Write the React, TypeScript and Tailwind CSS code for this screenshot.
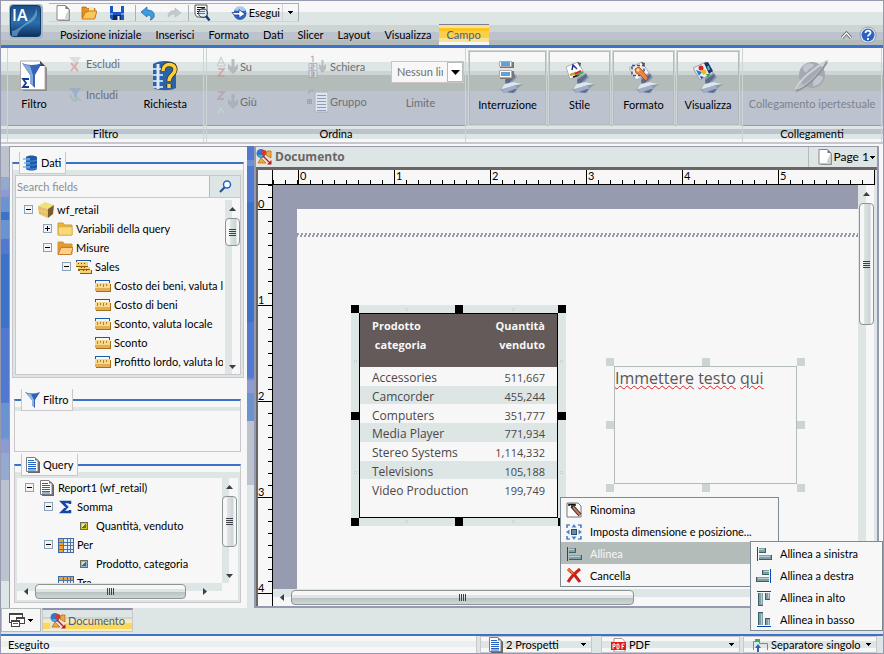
import React from 'react';
import clsx from 'clsx';

type IconProps = { className?: string };

/* ---------- Small shared glyphs ---------- */

const Caret = ({ className = '' }: IconProps) => (
  <svg viewBox="0 0 5 3" className={clsx('h-[3px] w-[5px] shrink-0', className)} shapeRendering="crispEdges">
    <path d="M0 0h5v1H4v1H3v1H2V2H1V1H0z" fill="#000" />
  </svg>
);

const Arrow = ({ dir }: { dir: 'up' | 'down' | 'left' | 'right' }) => {
  const paths = {
    up: 'M1 6l3.500-4L8 6z',
    down: 'M1 3l3.500 4L8 3z',
    left: 'M6 1L2 4.500 6 8z',
    right: 'M3 1l4 3.500L3 8z',
  };
  return (
    <svg viewBox="0 0 9 9" className="h-[9px] w-[9px] shrink-0">
      <path d={paths[dir]} fill="#3a3f48" />
    </svg>
  );
};

const Expander = ({ open }: { open: boolean }) => (
  <svg viewBox="0 0 9 9" className="h-[9px] w-[9px] shrink-0" shapeRendering="crispEdges">
    <path d="M0 0h9v9H0z" fill="#8aa3ba" />
    <path d="M1 1h7v7H1z" fill="#f3f3f3" />
    <path d="M2 4h5v1H2z" fill="#000" />
    {!open && <path d="M4 2h1v5H4z" fill="#000" />}
  </svg>
);

/* ---------- Toolbar icons ---------- */

const PageIcon = () => (
  <svg viewBox="0 0 16 16" className="h-4 w-4 shrink-0">
    <path d="M3.500 15.500V1H11l4 4v11H4z" fill="#9a9a9a" />
    <path d="M2 .5h8.500l3.500 3.500v11H2z" fill="#fff" stroke="#8a8787" />
    <path d="M10 15c0-4 1-7 3.500-9v9z" fill="#ccd5d3" />
    <path d="M10.500.5V4H14z" fill="#777" />
  </svg>
);

const OpenIcon = () => (
  <svg viewBox="0 0 16 16" className="h-4 w-4 shrink-0">
    <path d="M1 13V2h4l1.500 1.500H14V13z" fill="#e8921e" stroke="#b86a12" strokeWidth=".8" />
    <path d="M8 1.500l5 1v6H8z" fill="#fbe3a8" />
    <path d="M1 14L4 7.500l4-1.500h8L13.500 14z" fill="#fbc65a" stroke="#b86a12" strokeWidth=".8" />
  </svg>
);

const SaveIcon = () => (
  <svg viewBox="0 0 16 16" className="h-4 w-4 shrink-0">
    <path d="M1 1h14v14H3l-2-2z" fill="#1d56c0" />
    <path d="M4 1h8v6H4z" fill="#f3f3f3" />
    <path d="M4 10h8v5H4z" fill="#112b66" />
    <path d="M8.500 11h2v4h-2z" fill="#fff" />
    <path d="M1 8h3v2H1zM12 8h3v2h-3z" fill="#5e9ae8" />
  </svg>
);

const UndoIcon = ({ redo = false }: { redo?: boolean }) => (
  <svg viewBox="0 0 16 16" className="h-4 w-4 shrink-0">
    <path
      d={redo ? 'M15 8l-6-5v3C4 5 2 8 2 12l2-1c1-2 3-2 5-2v3z' : 'M1 7l6-5v3c5 0 8 2 7 7-1 2-3 3-4 3 2-2 1-5-3-5v2z'}
      fill={redo ? '#c3cbd2' : '#3d9be0'}
      stroke={redo ? '#b4bcba' : '#1b5ba8'}
      strokeWidth=".7"
    />
  </svg>
);

const PreviewIcon = () => (
  <svg viewBox="0 0 18 18" className="h-[18px] w-[18px] shrink-0">
    <path d="M2 1h12v12H4l-2-3z" fill="#fff" stroke="#555" />
    <path d="M4 3.500h8M4 5.500h8M4 7.500h8M4 9.500h8" stroke="#111" />
    <circle cx="10" cy="9" r="4.500" fill="#bcd9ef" fillOpacity=".5" stroke="#444" />
    <path d="M13 12l3.500 4.500" stroke="#1b3d7a" strokeWidth="2.500" />
  </svg>
);

const RunIcon = () => (
  <svg viewBox="0 0 16 16" className="h-4 w-4 shrink-0">
    <circle cx="9" cy="8.500" r="6.500" fill="#2f66c0" />
    <path d="M3 5c2-5 10-5 12 0-3 2-8 1-12 0z" fill="#a9cbee" />
    <path d="M1 7.500h7V4.500l6 4.500-6 4v-3H3z" fill="#fff" stroke="#1b3d9a" strokeWidth=".8" />
  </svg>
);

const AppLogo = () => (
  <svg viewBox="0 0 34 36" className="h-9 w-[34px]">
    <defs>
      <linearGradient id="logoFill" x1="0" y1="0" x2="0" y2="1">
        <stop offset="0" stopColor="#1c4f86" />
        <stop offset=".55" stopColor="#2a6fae" />
        <stop offset="1" stopColor="#0e2f5c" />
      </linearGradient>
    </defs>
    <rect x="0" y="0" width="34" height="35" rx="4" fill="#a9b8c6" />
    <rect x="1.500" y="1.500" width="30" height="31" rx="3" fill="url(#logoFill)" stroke="#123a66" />
    <path d="M27 4c4 10-4 14-10 17-5 3-7 6-9 11h-5v-5c6-1 9-5 14-8 5-4 10-8 10-15z" fill="#7fb6dd" fillOpacity=".6" />
    <text x="3" y="17" fontSize="16" fontWeight="600" fill="#fff" fontFamily="Open Sans, sans-serif">IA</text>
  </svg>
);

const HelpIcon = () => (
  <svg viewBox="0 0 18 18" className="h-[18px] w-[18px]">
    <circle cx="9" cy="9" r="8" fill="#e8edf0" stroke="#9aa0ac" />
    <circle cx="9" cy="9" r="6.500" fill="#2b62c4" />
    <path d="M6.500 7c0-3.500 5.500-3 5 0C11 8.500 9 9 9 10.500M9 12v2" stroke="#fff" strokeWidth="1.800" fill="none" />
  </svg>
);

/* ---------- Ribbon icons ---------- */

const FilterBigIcon = () => (
  <svg viewBox="0 0 28 32" className="h-8 w-7">
    <path d="M3 3h19l5 5v23H3z" fill="#8b8b8b" />
    <path d="M.5 1H20l5 5v23.500H.5z" fill="#fff" stroke="#b4a8a8" />
    <path d="M20 1v5h5z" fill="#444" />
    <path d="M2 3c5 2.500 14 2.500 20 0l-7 12v13l-5-5v-8z" fill="#3763b8" />
    <path d="M2 3c3 2 6 2.500 8 2.500l3 10v10l-3-3v-8z" fill="#86a9dc" />
    <path d="M9 19H3l3 4-3 4h6" fill="none" stroke="#163f94" strokeWidth="1.800" />
  </svg>
);

const QueryBigIcon = () => (
  <svg viewBox="0 0 28 32" className="h-8 w-7">
    <path d="M2 4c6-4 18-4 23 0v24c-5 3-17 3-23 0z" fill="#2c61ae" />
    <path d="M2 9h10M2 15h10M2 21h10M2 27h10" stroke="#b8d5ee" strokeWidth="2" />
    <path d="M7 4v25" stroke="#dfeaf4" strokeWidth="3" />
    <path d="M12 11c0-9 13-8 12-1-.5 5-6 5-6 11M18 24v4" fill="none" stroke="#3c2f08" strokeWidth="5" />
    <path d="M12 11c0-9 13-8 12-1-.5 5-6 5-6 11M18 24v4" fill="none" stroke="#f8d33c" strokeWidth="3.500" />
  </svg>
);

const ExcludeIcon = ({ include = false }: { include?: boolean }) => (
  <svg viewBox="0 0 16 16" className="h-4 w-4 shrink-0 opacity-60">
    <path d="M1 1h12l-4 6v6l-3-3V7z" fill={include ? '#8fa5cc' : '#ccd2d2'} />
    {include ? (
      <path d="M2 8l3 5 4 1M8 10l5 4" stroke="#96bc9e" strokeWidth="2" fill="none" />
    ) : (
      <path d="M3 7l7 8M10 6l-7 9" stroke="#d98c88" strokeWidth="2" />
    )}
  </svg>
);

const SortIcon = ({ down = false }: { down?: boolean }) => (
  <svg viewBox="0 0 21 24" className="h-6 w-[21px] shrink-0 opacity-70">
    {down ? (
      <path d="M1 2h6L1 9h6" fill="none" stroke="#ad9a9a" strokeWidth="1.500" />
    ) : (
      <path d="M1 14h6l-6 7h6" fill="none" stroke="#c98f8f" strokeWidth="1.500" />
    )}
    {down ? (
      <path d="M1 23l3-5 3 5" fill="none" stroke="#ccd5d3" strokeWidth="1.500" />
    ) : (
      <path d="M0 11l4-9 4 9zM2 8h4" fill="#e5eaea" stroke="#b4bcc2" />
    )}
    <path d="M11 9l3.500 3V4h3v8L21 9v5l-5 5-5-5z" fill="#a3abb0" />
  </svg>
);

const RankIcon = () => (
  <svg viewBox="0 0 21 24" className="h-6 w-[21px] shrink-0 opacity-70">
    <path d="M2 8.500h8v7H2zM2 15.500h8v7H2z" fill="#dde5e5" stroke="#94a4bd" />
    <path d="M6 1v6M4 2l2-1M4 10h3v2H4v2h3M4 17h3v4H4M4 19h3" stroke="#94798a" fill="none" />
    <path d="M12 9l2.500 2V5h2v6L19 9v5l-3.500 4-3.500-4z" fill="#a5aeb5" />
  </svg>
);

const GroupIcon = () => (
  <svg viewBox="0 0 21 24" className="h-6 w-[21px] shrink-0">
    <path d="M2 4V1h5M.5 9.500h4v4h-4zM2.500 10v3M1 11.500h3" fill="none" stroke="#8fa4cf" />
    <path d="M8 2h13v20H8z" fill="#dfe5ea" stroke="#a8b2bf" />
    <path d="M10 5.500h9M10 8.500h9M10 11.500h9M10 14.500h9M10 17.500h9M10 20.500h9" stroke="#8c9cc0" />
  </svg>
);

/* curled sheet that sits under every framed ribbon icon */
const Stand = () => (
  <g>
    <path d="M12 17l9-5 3 4-4 5 10 2-6 5-2 4H11l-4-4 5-4z" fill="#8b98b3" />
    <path d="M12 19l9-6 1 3-6 6-3 1z" fill="#5b6b8b" />
    <path d="M12 23l8-2 10 2-7 1-11 4-4 0z" fill="#dfe5ee" />
    <path d="M9 28l14-4 1 4-4 4h-9z" fill="#a3aec6" />
    <path d="M14 31l8-3 2 0-4 4z" fill="#5f6f92" />
  </g>
);

const BreakIcon = () => (
  <svg viewBox="0 0 30 32" className="h-8 w-[30px]">
    <Stand />
    <path d="M7 1h14v6H7zM7 10h14v8H7z" fill="#7a7672" />
    <path d="M6.500.5h12v5h-12zM6.500 9.500h12v7h-12z" fill="#fff" stroke="#b4a8a4" />
    <path d="M8 2h9M8 4h9M8 12h9M8 14h9" stroke="#2a82cf" strokeWidth="1.300" />
  </svg>
);

const StyleIcon = () => (
  <svg viewBox="0 0 30 32" className="h-8 w-[30px]">
    <Stand />
    <path d="M1 6l12-5 6 11-14 6z" fill="#fff" stroke="#9aa0a8" strokeWidth=".8" />
    <path d="M12 1l4 1-1 4z" fill="#555" />
    <path d="M7 9l1-5 4 4" stroke="#1f2c8c" strokeWidth="1.500" fill="none" />
    <path d="M5 14l6-2" stroke="#c9a23a" strokeWidth="2.500" />
    <path d="M10 13l6-3" stroke="#d8261f" strokeWidth="2.500" />
    <path d="M8 16l6-2" stroke="#111" strokeWidth="1.500" />
    <path d="M12 14l6-3" stroke="#46a848" strokeWidth="2" />
  </svg>
);

const FormatIcon = () => (
  <svg viewBox="0 0 30 32" className="h-8 w-[30px]">
    <Stand />
    <path d="M0 7l13-6 7 11-13 7z" fill="#f3f5f8" stroke="#9aa0a8" strokeWidth=".8" />
    <path d="M12 1l4 1-1 4z" fill="#555" />
    <path d="M3 4.500h12v10H3z" fill="#fbe3cf" stroke="#2459a8" strokeWidth="1.500" strokeDasharray="3 2" />
    <path d="M6 8l4-2 4 4 5 7-2 3-6-6-4-2z" fill="#e98545" stroke="#9c4715" strokeWidth=".8" />
    <circle cx="9" cy="9" r="1.500" fill="#ffe0bb" />
  </svg>
);

const ViewIcon = () => (
  <svg viewBox="0 0 30 32" className="h-8 w-[30px]">
    <Stand />
    <path d="M0 7l13-6 7 11-13 7z" fill="#e9eef2" stroke="#8a929c" strokeWidth=".8" />
    <path d="M11 2l4-1 5 9-4 3z" fill="#1b3560" />
    <circle cx="8" cy="7" r="2.500" fill="#d8261f" />
    <path d="M3 9l3 6 3-4z" fill="#2b7ac8" />
    <circle cx="11" cy="11" r="2.500" fill="#f5b921" />
    <path d="M13 13l4 0-2 4z" fill="#3ea14b" />
    <path d="M7 15l4 1-3 2z" fill="#1b49a8" />
    <path d="M15 5l1 4" stroke="#4fb4e0" strokeWidth="2" />
  </svg>
);

const LinkIcon = () => (
  <svg viewBox="0 0 34 32" className="h-8 w-[34px]">
    <circle cx="17" cy="15" r="13" fill="#a4a9b2" />
    <path d="M8 7c4-5 10-4 11-2-2 4-6 3-7 7-2 1-4-1-4-5zM19 17c5-3 8-1 9 1-2 6-7 8-10 8z" fill="#c2c7cd" />
    <path d="M1 29c3-9 18-21 31-28-5 10-18 23-28 28" fill="none" stroke="#cdd1d6" strokeWidth="2" />
    <path d="M1 31c8-2 22-14 31-29" fill="none" stroke="#8f949e" strokeWidth="2" />
  </svg>
);

/* ---------- Tree icons ---------- */

const DatabaseIcon = () => (
  <svg viewBox="0 0 16 16" className="h-4 w-4 shrink-0">
    <path d="M3 2c2-2 9-2 11 0v12c-2 2-9 2-11 0z" fill="#1d5aa8" />
    <path d="M0 4h7M1 8h6M0 12h7" stroke="#7db4e6" strokeWidth="1.500" />
    <path d="M3 5c3 1.500 8 1.500 11 0M3 9c3 1.500 8 1.500 11 0M3 13c3 1.500 8 1.500 11 0" stroke="#4a8fd6" fill="none" />
  </svg>
);

const CubeIcon = () => (
  <svg viewBox="0 0 16 16" className="h-4 w-4 shrink-0">
    <path d="M0 4l7-4 9 3-6 4z" fill="#f0e27a" />
    <path d="M0 4l10 3v9L1 12z" fill="#e3bd5c" />
    <path d="M10 7l6-4-1 9-5 4z" fill="#7d5c2b" />
    <path d="M4 5v9M7 6v9M1 8l9 3" stroke="#f0d48c" strokeWidth=".7" />
  </svg>
);

const FolderIcon = ({ open = false }: { open?: boolean }) => (
  <svg viewBox="0 0 16 16" className="h-4 w-4 shrink-0">
    <path d="M1 14V2h5l1.500 2H15v10z" fill={open ? '#e9982c' : '#efb634'} stroke="#c99a3c" />
    {open ? (
      <path d="M1 14.500l3-7h12l-2 7z" fill="#fbd08a" stroke="#c97a2e" />
    ) : (
      <path d="M1.500 6H15v8H1.500z" fill="#fada74" stroke="#d9a94a" strokeWidth=".6" />
    )}
  </svg>
);

const MeasureIcon = () => (
  <svg viewBox="0 0 16 16" className="h-4 w-4 shrink-0" shapeRendering="crispEdges">
    <path d="M0 5V2h15v3h-1V3H1v2z" fill="#1b5ba8" />
    <path d="M1 6h15v8H1z" fill="#a4701c" />
    <path d="M0 5h15v8H0z" fill="#f9d98c" />
    <path d="M0 10h15v3H0z" fill="#e6ae54" />
    <path d="M2 6h1v3H2zM5 6h1v2H5zM8 6h1v3H8zM11 6h1v2h-1z" fill="#b0803a" />
  </svg>
);

const MeasureGroupIcon = () => (
  <svg viewBox="0 0 16 16" className="h-4 w-4 shrink-0" shapeRendering="crispEdges">
    <path d="M0 3V1h15v2h-1V2H1v1z" fill="#1b5ba8" />
    <path d="M0 4h12v4H0zM2 8h12v4H2zM4 11h12v4H4z" fill="#8b5a14" />
    <path d="M0 3h12v4H0zM2 8h12v2H2zM4 11h11v3H4z" fill="#f9cf74" />
    <path d="M2 4h1v1H2zM5 4h1v1H5zM8 4h1v1H8zM5 8h1v1H5zM8 8h1v1H8zM7 11h1v1H7zM10 11h1v1h-1z" fill="#7a4c0e" />
  </svg>
);

const FunnelIcon = () => (
  <svg viewBox="0 0 16 16" className="h-4 w-4 shrink-0">
    <path d="M0 0c5 2 10 2 15 0l-5 8v8l-3-3V8z" fill="#2a63b8" />
    <path d="M0 0c2 1.500 4 2 6 2l3 6v7l-2-2V8z" fill="#8fb4df" />
  </svg>
);

const ReportIcon = () => (
  <svg viewBox="0 0 16 16" className="h-4 w-4 shrink-0">
    <path d="M3 2h9l3 3v11H3z" fill="#666" />
    <path d="M1.500.5H10l3 3v11H1.500z" fill="#fff" stroke="#7d7d7d" />
    <path d="M3 3.500h6M3 5.500h8M3 7.500h8M3 9.500h8M3 11.500h8M3 13h8" stroke="#2563c4" />
    <path d="M10 .5v3h3z" fill="#777" />
  </svg>
);

const SumIcon = () => (
  <svg viewBox="0 0 16 16" className="h-4 w-4 shrink-0">
    <path d="M12 5V3H4l5 5-5 5h8v-2" fill="none" stroke="#1348a6" strokeWidth="2.500" />
  </svg>
);

const GridIcon = ({ across = false }: { across?: boolean }) => (
  <svg viewBox="0 0 16 16" className="h-4 w-4 shrink-0" shapeRendering="crispEdges">
    <path d="M0 1h16v15H0z" fill="#3f6aa8" />
    <path d="M1 2h14v13H1z" fill="#e8eef6" />
    <path d={across ? 'M1 2h14v4H1z' : 'M1 2h4v13H1z'} fill="#f3a32c" />
    <path d="M5 1h1v14H5zM9 1h1v14H9zM12 1h1v14h-1zM1 5h14v1H1zM1 8h14v1H1zM1 12h14v1H1z" fill="#4d72a8" />
  </svg>
);

const FieldIcon = ({ color }: { color: string }) => (
  <svg viewBox="0 0 16 16" className="h-4 w-4 shrink-0" shapeRendering="crispEdges">
    <path d="M3 4h8v8H3z" fill="#6b7058" />
    <path d="M4 5h6v6H4z" fill={color} />
    <path d="M5 6h3v1H7v1H6v1H5z" fill="#fff" fillOpacity=".6" />
    <path d="M8 6h1v4H5V9h1V8h1V7h1z" fill="#222" fillOpacity=".55" />
  </svg>
);

const MagnifierIcon = () => (
  <svg viewBox="0 0 13 13" className="h-[13px] w-[13px]">
    <circle cx="8" cy="4.500" r="3.500" fill="#fff" stroke="#1f66bd" strokeWidth="1.500" />
    <path d="M5.500 7.500L1 12" stroke="#1f4d94" strokeWidth="2" />
  </svg>
);

const DocumentIcon = () => (
  <svg viewBox="0 0 16 16" className="h-4 w-4 shrink-0">
    <rect width="16" height="16" fill="#e8e4dc" />
    <circle cx="5" cy="4.500" r="4.500" fill="#3275cf" />
    <path d="M1 6h6l-2 3z" fill="#43b2cf" />
    <circle cx="8" cy="3.500" r="2.500" fill="#e53222" />
    <path d="M11 2h4v7l-5-3zM2 14l3-5 5 5z" fill="#f0a93a" stroke="#9c6c1a" strokeWidth=".7" />
    <path d="M7 7l7 7" stroke="#c4161c" strokeWidth="1.200" />
    <path d="M15.500 15.500v-4.500l-4.500 4.500z" fill="#c4161c" />
  </svg>
);

const WindowsIcon = () => (
  <svg viewBox="0 0 16 16" className="h-4 w-4 shrink-0" shapeRendering="crispEdges">
    <path d="M0 1h14v10H0z" fill="#444" />
    <path d="M1 3h12v7H1z" fill="#fff" />
    <path d="M7 5h9v7H7z" fill="#444" />
    <path d="M8 7h7v4H8z" fill="#fff" />
    <path d="M2 8h9v7H2z" fill="#444" />
    <path d="M3 10h7v4H3z" fill="#fff" />
    <path d="M4 11h5v1H4z" fill="#2563c4" />
  </svg>
);

/* ---------- Menu icons ---------- */

const RenameIcon = () => (
  <svg viewBox="0 0 16 16" className="h-4 w-4 shrink-0">
    <path d="M1 1h11l3 3v11H1z" fill="#fff" stroke="#777" />
    <path d="M3 4V2.500h6V4M6 3v3" fill="none" stroke="#111" strokeWidth="1.500" />
    <path d="M6 4l8 9" stroke="#333" strokeWidth="4" />
    <path d="M7 5l7 8" stroke="#d2745c" strokeWidth="2" />
  </svg>
);

const ResizeIcon = () => (
  <svg viewBox="0 0 16 16" className="h-4 w-4 shrink-0">
    <path d="M1 4V1h3M12 1h3v3M15 12v3h-3M4 15H1v-3" fill="none" stroke="#1558b8" strokeWidth="1.200" />
    <path d="M8 0l2.500 3.500h-5zM8 16l2.500-3.500h-5zM0 8l3.500-2.500v5zM16 8l-3.500-2.500v5z" fill="#4a83d2" />
    <rect x="5.500" y="5.500" width="5" height="5" fill="#5d8fae" stroke="#2b4c6c" />
  </svg>
);

const DeleteIcon = () => (
  <svg viewBox="0 0 16 16" className="h-4 w-4 shrink-0">
    <path d="M2 1c4 3 8 7 12 13M14 1C9 5 5 9 2 14" fill="none" stroke="#c9201a" strokeWidth="3" />
    <path d="M2 1c2 2 4 3 5 5" stroke="#f07a3a" strokeWidth="2" fill="none" />
  </svg>
);

const AlignIcon = ({ side }: { side: 'left' | 'right' | 'top' | 'bottom' }) => {
  const turn = {
    left: undefined,
    right: 'matrix(-1 0 0 1 16 0)',
    top: 'matrix(0 1 -1 0 16 0)',
    bottom: 'matrix(0 -1 -1 0 16 16)',
  };
  return (
    <svg viewBox="0 0 16 16" className="h-4 w-4 shrink-0" shapeRendering="crispEdges">
      <g transform={turn[side]}>
        <path d="M1 1h1v14H1z" fill="#0a45b0" />
        <path d="M3 2h7v5H3zM3 9h13v5H3z" fill="#3f5f68" />
        <path d="M3 2h6v4H3zM3 9h12v4H3z" fill="#7f9fa6" />
        <path d="M3 3h5v1H3zM3 10h11v1H3z" fill="#b9cfd3" />
      </g>
    </svg>
  );
};

const PdfIcon = () => (
  <svg viewBox="0 0 16 14" className="h-[14px] w-4 shrink-0">
    <path d="M3 .5h8l3 3V14H3z" fill="#fff" stroke="#999" />
    <rect x="0" y="4" width="15" height="8" fill="#e01b18" />
    <path d="M2 11V6h2v2.500H2M6 6v5h1.500l.5-1V7l-.5-1H6M11 11V6h2.500M11 8.500h2" stroke="#fff" fill="none" />
  </svg>
);

const SeparatorIcon = () => (
  <svg viewBox="0 0 16 14" className="h-[14px] w-4 shrink-0">
    <path d="M.5 12V3.500h6v2h8V12" fill="none" stroke="#7b8790" />
    <rect x="2" y="1" width="5" height="3" fill="#31b44c" />
    <path d="M5 6l3 4H6v4H4v-4H2z" fill="#2c62b8" />
  </svg>
);

/* ---------- Scroll bars ---------- */

const VScroll = ({ thumb, className }: { thumb: string; className?: string }) => (
  <div className={clsx('flex w-[15px] shrink-0 flex-col items-center bg-[linear-gradient(90deg,#dde5e5_7px,#f7f7f7_7px)]', className)}>
    <div className="flex h-[18px] shrink-0 items-center"><Arrow dir="up" /></div>
    <div className={clsx('flex w-full flex-col items-center justify-center gap-px rounded-sm border border-[#8c9494] bg-[linear-gradient(90deg,#f7f7f7_4px,#dde5e5_4px,#ccd5d3_10px,#f7f7f7_11px)]', thumb)}>
      {[0, 1, 2, 3].map((n) => <span key={n} className="h-px w-[7px] bg-[#3a3f48]" />)}
    </div>
    <div className="mt-auto flex h-[16px] items-center"><Arrow dir="down" /></div>
  </div>
);

const HScroll = ({ thumb, className, children }: { thumb: string; className?: string; children?: React.ReactNode }) => (
  <div className={clsx('flex shrink-0 items-center bg-[linear-gradient(#dde5e5_8px,#f7f7f7_8px)]', className)}>
    <div className="flex w-[18px] shrink-0 justify-center"><Arrow dir="left" /></div>
    <div className={clsx('flex h-[15px] items-center justify-center gap-px rounded-sm border border-[#8c9494] bg-[linear-gradient(#f7f7f7_4px,#dde5e5_4px,#dde5e5_7px,#b9c1c0_7px,#ccd5d3_12px)]', thumb)}>
      {[0, 1, 2, 3].map((n) => <span key={n} className="h-[7px] w-px bg-[#3a3f48]" />)}
    </div>
    {children}
  </div>
);

/* ---------- Header ---------- */

const tabs = ['Posizione iniziale', 'Inserisci', 'Formato', 'Dati', 'Slicer', 'Layout', 'Visualizza'];

const Divider = () => <span className="h-4 w-px bg-[#a9b0c0]" />;

const Header = () => (
  <header className="flex h-12 shrink-0 border-b-[3px] border-[#3c72c8] bg-[linear-gradient(#969ab0_1px,#f7f7f7_1px,#f7f7f7_12px,#dde5e5_12px,#dde5e5_25px,#ccd5d3_25px,#ccd5d3_32px,#bcc3ce_32px,#bcc3ce_40px,#b4bcba_40px)]">
    <div className="w-12 shrink-0 pt-1 pl-2"><AppLogo /></div>
    <div className="flex flex-1 flex-col">
      <div className="mt-[3px] flex h-[19px] w-[250px] items-center border border-l-0 border-[#a9b0b8] border-b-[#ccd5d3] pl-[6px]">
        <button aria-label="Nuovo" className="mr-2.5"><PageIcon /></button>
        <button aria-label="Apri" className="mr-3"><OpenIcon /></button>
        <button aria-label="Salva" className="mr-2.5"><SaveIcon /></button>
        <Divider />
        <button aria-label="Annulla" className="mx-1"><UndoIcon /></button>
        <button aria-label="Ripeti" className="mr-1.5 ml-1.5" disabled><UndoIcon redo /></button>
        <Divider />
        <button aria-label="Anteprima" className="mx-1"><PreviewIcon /></button>
        <span className="mx-1"><Divider /></span>
        <button className="ml-auto flex items-center gap-[2px]"><RunIcon />Esegui</button>
        <button aria-label="Opzioni di esecuzione" className="ml-[2px] flex h-full w-4 items-center justify-center border-l border-[#ccd5d3]"><Caret /></button>
      </div>
      <nav className="mt-[2px] flex h-[22px] items-center pl-1">
        {tabs.map((tab) => (
          <button key={tab} className="h-full px-[7px]">{tab}</button>
        ))}
        <button className="h-full border-t border-[#7d7d94] bg-[linear-gradient(#fbe290_3px,#fcc41c_3px,#fcc41c_6px,#fbcf4a_6px,#fbcf4a_13px,#fbe290_13px,#fbe290_17px,#f7f7f7_17px)] px-2 text-[#4a5a84]">
          Campo
        </button>
        <button aria-label="Riduci barra" className="mr-[7px] ml-auto">
          <svg viewBox="0 0 11 8" className="h-2 w-[11px]">
            <path d="M1 7l4.500-5L10 7" fill="none" stroke="#666" strokeWidth="3" />
            <path d="M1 7l4.500-5L10 7" fill="none" stroke="#fff" strokeWidth="1.200" />
          </svg>
        </button>
        <button aria-label="Guida" className="mr-[6px]"><HelpIcon /></button>
      </nav>
    </div>
  </header>
);

/* ---------- Ribbon ---------- */

const BigButton = ({ icon, label, framed, disabled, className }: {
  icon: React.ReactNode;
  label: string;
  framed?: boolean;
  disabled?: boolean;
  className?: string;
}) => (
  <button
    disabled={disabled}
    className={clsx(
      'flex flex-col items-center whitespace-nowrap',
      framed ? 'mt-[3px] h-[74px] border border-[#b4bcba] pt-[9px] outline outline-[#ccd5d3]' : 'pt-3',
      disabled && 'text-[#7d828c]',
      className,
    )}
  >
    {icon}
    <span className="mt-1 leading-4">{label}</span>
  </button>
);

const SmallButton = ({ icon, label }: { icon: React.ReactNode; label: string }) => (
  <button disabled className="flex h-6 items-center gap-[2px] text-[#6b6f75]">{icon}{label}</button>
);

const RibbonGroup = ({ title, className, children }: { title?: string; className?: string; children: React.ReactNode }) => (
  <section className={clsx('flex flex-col border-x border-[#ccd5d3]', className)}>
    <div className="flex h-[78px] border-b border-[#8f9bc8]">{children}</div>
    <h2 className="text-center leading-4">{title}</h2>
  </section>
);

const Ribbon = () => (
  <div className="flex h-[96px] shrink-0 gap-[2px] border-b-2 border-[#c9c7cb] bg-[linear-gradient(#f7f7f7_14px,#dde5e5_14px,#dde5e5_23px,#ccd5d3_23px,#ccd5d3_27px,#b4bcba_27px,#b4bcba_43px,#bcc3ce_43px,#bcc3ce_78px,#dde5e5_78px,#dde5e5_81px,#bcc3ce_81px,#bcc3ce_86px,#dde5e5_86px,#dde5e5_91px,#f7f7f7_91px)] pl-[6px]">
    <RibbonGroup title="Filtro" className="w-[197px]">
      <BigButton icon={<FilterBigIcon />} label="Filtro" className="ml-[10px] w-8" />
      <div className="mt-1 ml-[18px] flex flex-col gap-[7px]">
        <SmallButton icon={<ExcludeIcon />} label="Escludi" />
        <SmallButton icon={<ExcludeIcon include />} label="Includi" />
      </div>
      <BigButton icon={<QueryBigIcon />} label="Richiesta" className="mr-4 ml-auto" />
    </RibbonGroup>
    <RibbonGroup title="Ordina" className="w-[260px]">
      <div className="mt-[7px] ml-[10px] flex w-[90px] flex-col gap-[11px]">
        <SmallButton icon={<SortIcon />} label="Su" />
        <SmallButton icon={<SortIcon down />} label="Giù" />
      </div>
      <div className="mt-[7px] flex flex-col gap-[11px]">
        <SmallButton icon={<RankIcon />} label="Schiera" />
        <SmallButton icon={<GroupIcon />} label="Gruppo" />
      </div>
      <div className="mt-[13px] mr-[1px] ml-auto w-[73px] text-[#6b6f75]">
        <div className="relative h-[22px]">
          <select id="limit" disabled className="h-full w-full appearance-none overflow-hidden border border-[#ccc5c5] bg-[#f7f7f7] pr-[20px] pl-[5px] opacity-100">
            <option>Nessun limite</option>
          </select>
          <span className="pointer-events-none absolute inset-y-px right-px flex w-4 items-center justify-center border border-[#b4bcba] bg-white">
            <svg viewBox="0 0 9 5" className="h-[5px] w-[9px]"><path d="M0 0h9L4.500 5z" fill="#000" /></svg>
          </span>
        </div>
        <label htmlFor="limit" className="mt-3 block pr-[14px] text-center leading-4">Limite</label>
      </div>
    </RibbonGroup>
    <section className="flex flex-1 flex-col">
      <div className="flex h-[78px] gap-[3px] border-b border-[#8f9bc8] pl-px">
        <BigButton framed icon={<BreakIcon />} label="Interruzione" className="w-[77px]" />
        <BigButton framed icon={<StyleIcon />} label="Stile" className="w-[61px]" />
        <BigButton framed icon={<FormatIcon />} label="Formato" className="w-[61px]" />
        <BigButton framed icon={<ViewIcon />} label="Visualizza" className="w-[62px]" />
      </div>
    </section>
    <RibbonGroup title="Collegamenti" className="mr-px w-[140px]">
      <BigButton disabled icon={<LinkIcon />} label="Collegamento ipertestuale" className="w-full" />
    </RibbonGroup>
  </div>
);

/* ---------- Sidebar ---------- */

interface TreeNode {
  level: number;
  label: string;
  icon: React.ReactNode;
  open?: boolean;
}

const dataTree: TreeNode[] = [
  { level: 0, label: 'wf_retail', icon: <CubeIcon />, open: true },
  { level: 1, label: 'Variabili della query', icon: <FolderIcon />, open: false },
  { level: 1, label: 'Misure', icon: <FolderIcon open />, open: true },
  { level: 2, label: 'Sales', icon: <MeasureGroupIcon />, open: true },
  { level: 3, label: 'Costo dei beni, valuta locale', icon: <MeasureIcon /> },
  { level: 3, label: 'Costo di beni', icon: <MeasureIcon /> },
  { level: 3, label: 'Sconto, valuta locale', icon: <MeasureIcon /> },
  { level: 3, label: 'Sconto', icon: <MeasureIcon /> },
  { level: 3, label: 'Profitto lordo, valuta locale', icon: <MeasureIcon /> },
  { level: 3, label: '', icon: <MeasureIcon /> },
];

const queryTree: TreeNode[] = [
  { level: 0, label: 'Report1 (wf_retail)', icon: <ReportIcon />, open: true },
  { level: 1, label: 'Somma', icon: <SumIcon />, open: true },
  { level: 2, label: 'Quantità, venduto', icon: <FieldIcon color="#d8c81c" /> },
  { level: 1, label: 'Per', icon: <GridIcon />, open: true },
  { level: 2, label: 'Prodotto, categoria', icon: <FieldIcon color="#8fb0d8" /> },
  { level: 1, label: 'Tra', icon: <GridIcon across /> },
];

const indents = ['pl-[8px]', 'pl-[27px]', 'pl-[46px]', 'pl-[65px]'];

const Tree = ({ nodes }: { nodes: TreeNode[] }) => (
  <ul className="min-w-0 flex-1 overflow-hidden">
    {nodes.map((node, i) => (
      <li key={i} className={clsx('flex h-[19px] items-center whitespace-nowrap', indents[node.level])}>
        <span className="mr-[5px] w-[9px] shrink-0">
          {node.open !== undefined && <Expander open={node.open} />}
        </span>
        {node.icon}
        <span className="ml-[3px]">{node.label}</span>
      </li>
    ))}
  </ul>
);

const Panel = ({ title, icon, className, children }: {
  title: string;
  icon: React.ReactNode;
  className?: string;
  children?: React.ReactNode;
}) => (
  <section className={clsx('relative flex flex-col border border-t-2 border-[#c9c7cb] border-t-[#3c72c8]', className)}>
    <h2 className="absolute -top-[12px] left-[6px] flex h-[22px] items-center gap-[2px] border border-t-0 border-[#c9c7cb] bg-[#f7f7f7] pr-1 pl-[3px]">
      {icon}{title}
    </h2>
    {children}
  </section>
);

const Sidebar = () => (
  <aside className="flex w-[238px] shrink-0 flex-col border-t border-l border-[#9a9aa4] bg-[#f7f7f7] pt-[15px] pb-[5px]">
    <Panel title="Dati" icon={<DatabaseIcon />} className="mx-[2px] mr-[3px] min-h-0 flex-1 bg-[linear-gradient(#f7f7f7_6px,#dde5e5_6px)] px-[2px] pt-[11px] pb-[2px]">
      <div className="flex h-[23px] shrink-0 border border-[#c9c7cb]">
        <input aria-label="Search fields" placeholder="Search fields" className="min-w-0 flex-1 bg-[#f7f7f7] px-[1px] placeholder:text-[#8a8e92]" />
        <button aria-label="Cerca" className="flex w-[31px] items-center justify-center border-l border-[#b4bcba] bg-[#dde5e5]"><MagnifierIcon /></button>
      </div>
      <div className="flex min-h-0 flex-1 overflow-hidden border border-t-0 border-[#c9c7cb] bg-[#f7f7f7] pt-[2px]">
        <Tree nodes={dataTree} />
        <VScroll thumb="h-[28px]" className="ml-[2px]" />
      </div>
    </Panel>
    <Panel title="Filtro" icon={<FunnelIcon />} className="mx-[4px] mt-[21px] mr-[6px] h-[53px] shrink-0 bg-[linear-gradient(#f7f7f7_6px,#dde5e5_6px,#dde5e5_10px,#f7f7f7_10px)]" />
    <Panel title="Query" icon={<ReportIcon />} className="mx-[4px] mt-[12px] mr-[6px] h-[139px] shrink-0 bg-[linear-gradient(#f7f7f7_6px,#dde5e5_6px)] px-[2px] pt-[12px] pb-[2px]">
      <div className="flex min-h-0 flex-1 overflow-hidden bg-[#f7f7f7]">
        <Tree nodes={queryTree} />
        <VScroll thumb="h-[51px]" className="mr-[1px]" />
      </div>
      <div className="flex items-center">
        <HScroll thumb="w-[151px]" className="h-[17px] flex-1">
          <div className="flex flex-1 justify-center"><Arrow dir="right" /></div>
        </HScroll>
        <span className="h-[17px] w-4 bg-[#f7f7f7]" />
      </div>
    </Panel>
  </aside>
);

/* ---------- Document ---------- */

const reportRows = [
  ['Accessories', '511,667'],
  ['Camcorder', '455,244'],
  ['Computers', '351,777'],
  ['Media Player', '771,934'],
  ['Stereo Systems', '1,114,332'],
  ['Televisions', '105,188'],
  ['Video Production', '199,749'],
];

const handleSpots = [
  'top-0 left-0',
  'top-0 left-1/2 -ml-1',
  'top-0 right-0',
  'top-1/2 left-0 -mt-1',
  'top-1/2 right-0 -mt-1',
  'bottom-0 left-0',
  'bottom-0 left-1/2 -ml-1',
  'bottom-0 right-0',
];

// small marks half way between the handles of the active object
const markSpots = [
  'top-[3px] left-1/4',
  'top-[3px] left-3/4',
  'bottom-[3px] left-1/4',
  'bottom-[3px] left-3/4',
  'left-[3px] top-1/4',
  'left-[3px] top-3/4',
  'right-[3px] top-1/4',
  'right-[3px] top-3/4',
];

const Handles = ({ color }: { color: string }) => (
  <>
    {handleSpots.map((spot) => <span key={spot} className={clsx('absolute h-2 w-2', spot, color)} />)}
  </>
);

const ReportTable = () => (
  <div className="absolute top-[120px] left-[78px] bg-[#dde5e5] p-2">
    {markSpots.map((spot) => <span key={spot} className={clsx('absolute h-[3px] w-[3px] border border-[#ccd5d3] bg-white', spot)} />)}
    <Handles color="bg-black" />
    <div className="h-[205px] w-[199px] border border-black bg-[#f7f7f7] font-['Open_Sans',sans-serif] text-[#4b4747]">
      <table className="h-[184px] w-full border-collapse">
        <thead>
          <tr className="h-[53px] bg-[#635a59] align-top text-[11px] leading-[19px] text-[#f7f7f7]">
            <th className="pt-[2px] pl-3 text-left font-bold">Prodotto<br />&nbsp;categoria</th>
            <th className="pt-[2px] pr-3 text-right font-bold">Quantità<br />venduto</th>
          </tr>
        </thead>
        <tbody>
          {reportRows.map(([name, qty]) => (
            <tr key={name} className="text-[12px] leading-[14px] even:bg-[#dde5e5]">
              <td className="pt-1 pl-3">{name}</td>
              <td className="pt-1 pr-3 text-right text-[11px]">{qty}</td>
            </tr>
          ))}
        </tbody>
      </table>
    </div>
  </div>
);

const TextObject = () => (
  <div className="absolute top-[173px] left-[333px] p-2">
    <Handles color="bg-[#ccd5d3]" />
    <div
      role="textbox"
      aria-label="Testo"
      className="h-[118px] w-[183px] border border-[#b4bcba] font-['Open_Sans',sans-serif] text-[16px] leading-[22px] text-[#5a5654]"
    >
      {['Immettere', 'testo', 'qui'].map((word, i) => (
        <React.Fragment key={word}>
          {i > 0 && ' '}
          <span className="underline decoration-[#e02020] decoration-wavy decoration-1 underline-offset-1">{word}</span>
        </React.Fragment>
      ))}
    </div>
  </div>
);

const Document = () => (
  <main className="flex min-w-0 flex-1 flex-col border-2 border-t border-[#969ab0] bg-[#dde5e5]">
    <div className="flex h-5 shrink-0 items-center gap-[3px]">
      <DocumentIcon />
      <h1 className="font-['Open_Sans',sans-serif] text-[12px] font-bold text-[#6b6665]">Documento</h1>
      <button className="ml-auto flex h-full items-center gap-[1px] border-l border-[#b4bcba] pr-[2px] pl-[8px] text-[12px]">
        <PageIcon />
        <span>Page 1</span><Caret />
      </button>
    </div>
    <div className="flex min-h-0 flex-1 flex-col border-t-[3px] border-l-2 border-[#6b6665]">
      {/* horizontal ruler */}
      <div className="mr-[2px] flex h-[15px] shrink-0 overflow-hidden border-r border-b border-black bg-[#f7f7f7]">
        <div className="w-[15px] shrink-0 border-r border-black" />
        <div className="w-[25px] shrink-0 bg-[repeating-linear-gradient(90deg,#000_0_1px,transparent_1px_12px)] bg-[length:100%_4px] bg-bottom bg-no-repeat" />
        {[0, 1, 2, 3, 4, 5].map((n) => (
          <div key={n} className="w-24 shrink-0 border-l border-black bg-[repeating-linear-gradient(90deg,transparent_0_11px,#000_11px_12px)] bg-[length:100%_4px] bg-bottom bg-no-repeat pl-[1px] leading-[12px]">{n}</div>
        ))}
      </div>
      <div className="flex min-h-0 flex-1">
        {/* vertical ruler */}
        <div className="flex w-[15px] shrink-0 flex-col overflow-hidden border-r border-black bg-[#f7f7f7]">
          {[0, 1, 2, 3, 4].map((n) => (
            <div
              key={n}
              className={clsx(
                'flex shrink-0 items-end border-b border-black bg-[repeating-linear-gradient(0deg,transparent_0_11px,#000_11px_12px)] bg-[length:4px_100%] bg-right bg-no-repeat leading-[11px]',
                n === 0 ? 'h-[25px]' : 'h-24',
              )}
            >
              {n}
            </div>
          ))}
        </div>
        <div className="flex min-w-0 flex-1 flex-col">
          <div className="flex min-h-0 flex-1">
            <div className="relative min-w-0 flex-1 overflow-hidden bg-[#969bb0] pt-6 pl-6">
              <div className="h-full bg-[#f7f7f7] pt-6">
                <div className="h-[2px] bg-[repeating-linear-gradient(90deg,#969bb0_0_2px,transparent_2px_4px)]" />
                <div className="-mx-px h-[2px] bg-[repeating-linear-gradient(90deg,#969bb0_0_2px,transparent_2px_4px)]" />
              </div>
              <ReportTable />
              <TextObject />
            </div>
            <VScroll thumb="h-[122px]" className="mr-[3px] ml-px" />
          </div>
          <HScroll thumb="w-[343px]" className="h-[17px]" />
        </div>
      </div>
    </div>
  </main>
);

/* ---------- Context menus ---------- */

const MenuItem = ({ icon, label, active }: { icon: React.ReactNode; label: string; active?: boolean }) => (
  <button role="menuitem" className={clsx('flex h-[22px] w-full items-center gap-2 pt-px pl-[5px] whitespace-nowrap', active && 'bg-[#b4bcba] text-[#f7f7f7]')}>
    {icon}{label}
  </button>
);

const ContextMenus = () => (
  <>
    <div role="menu" className="absolute top-[497px] left-[559px] w-[219px] border border-[#7d8a94] bg-[#f7f7f7]">
      <MenuItem icon={<RenameIcon />} label="Rinomina" />
      <MenuItem icon={<ResizeIcon />} label="Imposta dimensione e posizione..." />
      <MenuItem icon={<AlignIcon side="left" />} label="Allinea" active />
      <MenuItem icon={<DeleteIcon />} label="Cancella" />
    </div>
    <div role="menu" className="absolute top-[541px] left-[749px] w-[133px] border border-[#7d8a94] bg-[#f7f7f7]">
      <MenuItem icon={<AlignIcon side="left" />} label="Allinea a sinistra" />
      <MenuItem icon={<AlignIcon side="right" />} label="Allinea a destra" />
      <MenuItem icon={<AlignIcon side="top" />} label="Allinea in alto" />
      <MenuItem icon={<AlignIcon side="bottom" />} label="Allinea in basso" />
    </div>
  </>
);

/* ---------- Footer ---------- */

const StatusSelect = ({ icon, value, name, className }: { icon: React.ReactNode; value: string; name: string; className?: string }) => (
  <label className={clsx('relative flex h-full items-center gap-1 border border-[#c9c7cb] bg-[linear-gradient(#f7f7f7_4px,#dde5e5_4px,#dde5e5_11px,#f7f7f7_11px)]', className)}>
    {icon}
    <select aria-label={name} className="min-w-0 flex-1 appearance-none bg-transparent">
      <option>{value}</option>
    </select>
    <Caret className="pointer-events-none absolute right-[5px]" />
  </label>
);

const Footer = () => (
  <footer className="shrink-0">
    <div className="flex h-[26px] items-start gap-px bg-[#dde5e5]">
      <button aria-label="Finestre" className="flex h-6 w-[40px] items-center justify-center gap-[3px] border border-[#b4bcba] bg-[#f7f7f7]">
        <WindowsIcon /><Caret />
      </button>
      <button className="flex h-6 items-center gap-[2px] border border-t-2 border-[#c9c7cb] border-t-[#8a93a8] bg-[linear-gradient(#dde5e5_7px,#ccd5d3_7px,#ccd5d3_9px,#fbe9ae_9px,#fbe9ae_13px,#fbd75a_13px,#fbd75a_19px,#f8eccb_19px)] px-[7px] text-[#4a5a84]">
        <DocumentIcon />Documento
      </button>
    </div>
    <div className="flex h-5 items-stretch gap-[3px] border-t-2 border-b border-t-[#3c72c8] border-b-[#969ab0] bg-[#dde5e5]">
      <p className="flex flex-1 items-center border-r border-[#c9c7cb] bg-[linear-gradient(#f7f7f7_5px,#eaf0f0_5px,#eaf0f0_11px,#f7f7f7_11px)] pl-[7px]">Eseguito</p>
      <StatusSelect name="Prospetti" icon={<ReportIcon />} value="2 Prospetti" className="w-[112px] gap-[2px] pl-[7px]" />
      <StatusSelect name="Formato di output" icon={<PdfIcon />} value="PDF" className="ml-[6px] w-[139px] gap-[2px] pl-[9px]" />
      <StatusSelect name="Separatore" icon={<SeparatorIcon />} value="Separatore singolo" className="mr-[6px] w-[134px] gap-[2px] pl-[9px]" />
    </div>
  </footer>
);

export default function App() {
  return (
    <div className="relative flex h-screen flex-col overflow-hidden border-x border-[#969ab0] bg-[#f7f7f7] font-['Lato','Open_Sans',sans-serif] text-[11px] leading-4 text-black">
      <Header />
      <Ribbon />
      <div className="flex min-h-0 flex-1 pt-[2px]">
        <div className="w-2 shrink-0 bg-[linear-gradient(#bcc3ce_31px,#94a9cf_31px,#94a9cf_44px,#8e9bd3_44px,#8e9bd3_51px,#6b93cf_51px,#6b93cf_66px,#3c72c8_66px,#3c72c8_74px,#6b93cf_74px,#6b93cf_93px,#5079cf_93px,#5079cf_108px,#3c72c8_108px,#3c72c8_182px,#5079cf_182px,#5079cf_257px,#6b93cf_257px,#6b93cf_291px,#8e9bd3_295px,#8e9bd3_307px,#94a9cf_307px,#94a9cf_334px,#bcc3ce_334px,#bcc3ce_435px,#dde5e5_435px)]" />
        <Sidebar />
        <div className="w-[7px] shrink-0 bg-[linear-gradient(#5079cf_14px,#6b93cf_14px,#6b93cf_20px,#5079cf_20px,#5079cf_56px,#3c72c8_56px,#3c72c8_176px,#5079cf_176px,#5079cf_231px,#8e9bd3_235px,#8e9bd3_247px,#6b93cf_247px,#6b93cf_275px,#bcc3ce_275px,#bcc3ce_339px,#dde5e5_339px)]" />
        <Document />
        <div className="w-1 shrink-0" />
      </div>
      <Footer />
      <ContextMenus />
    </div>
  );
}
